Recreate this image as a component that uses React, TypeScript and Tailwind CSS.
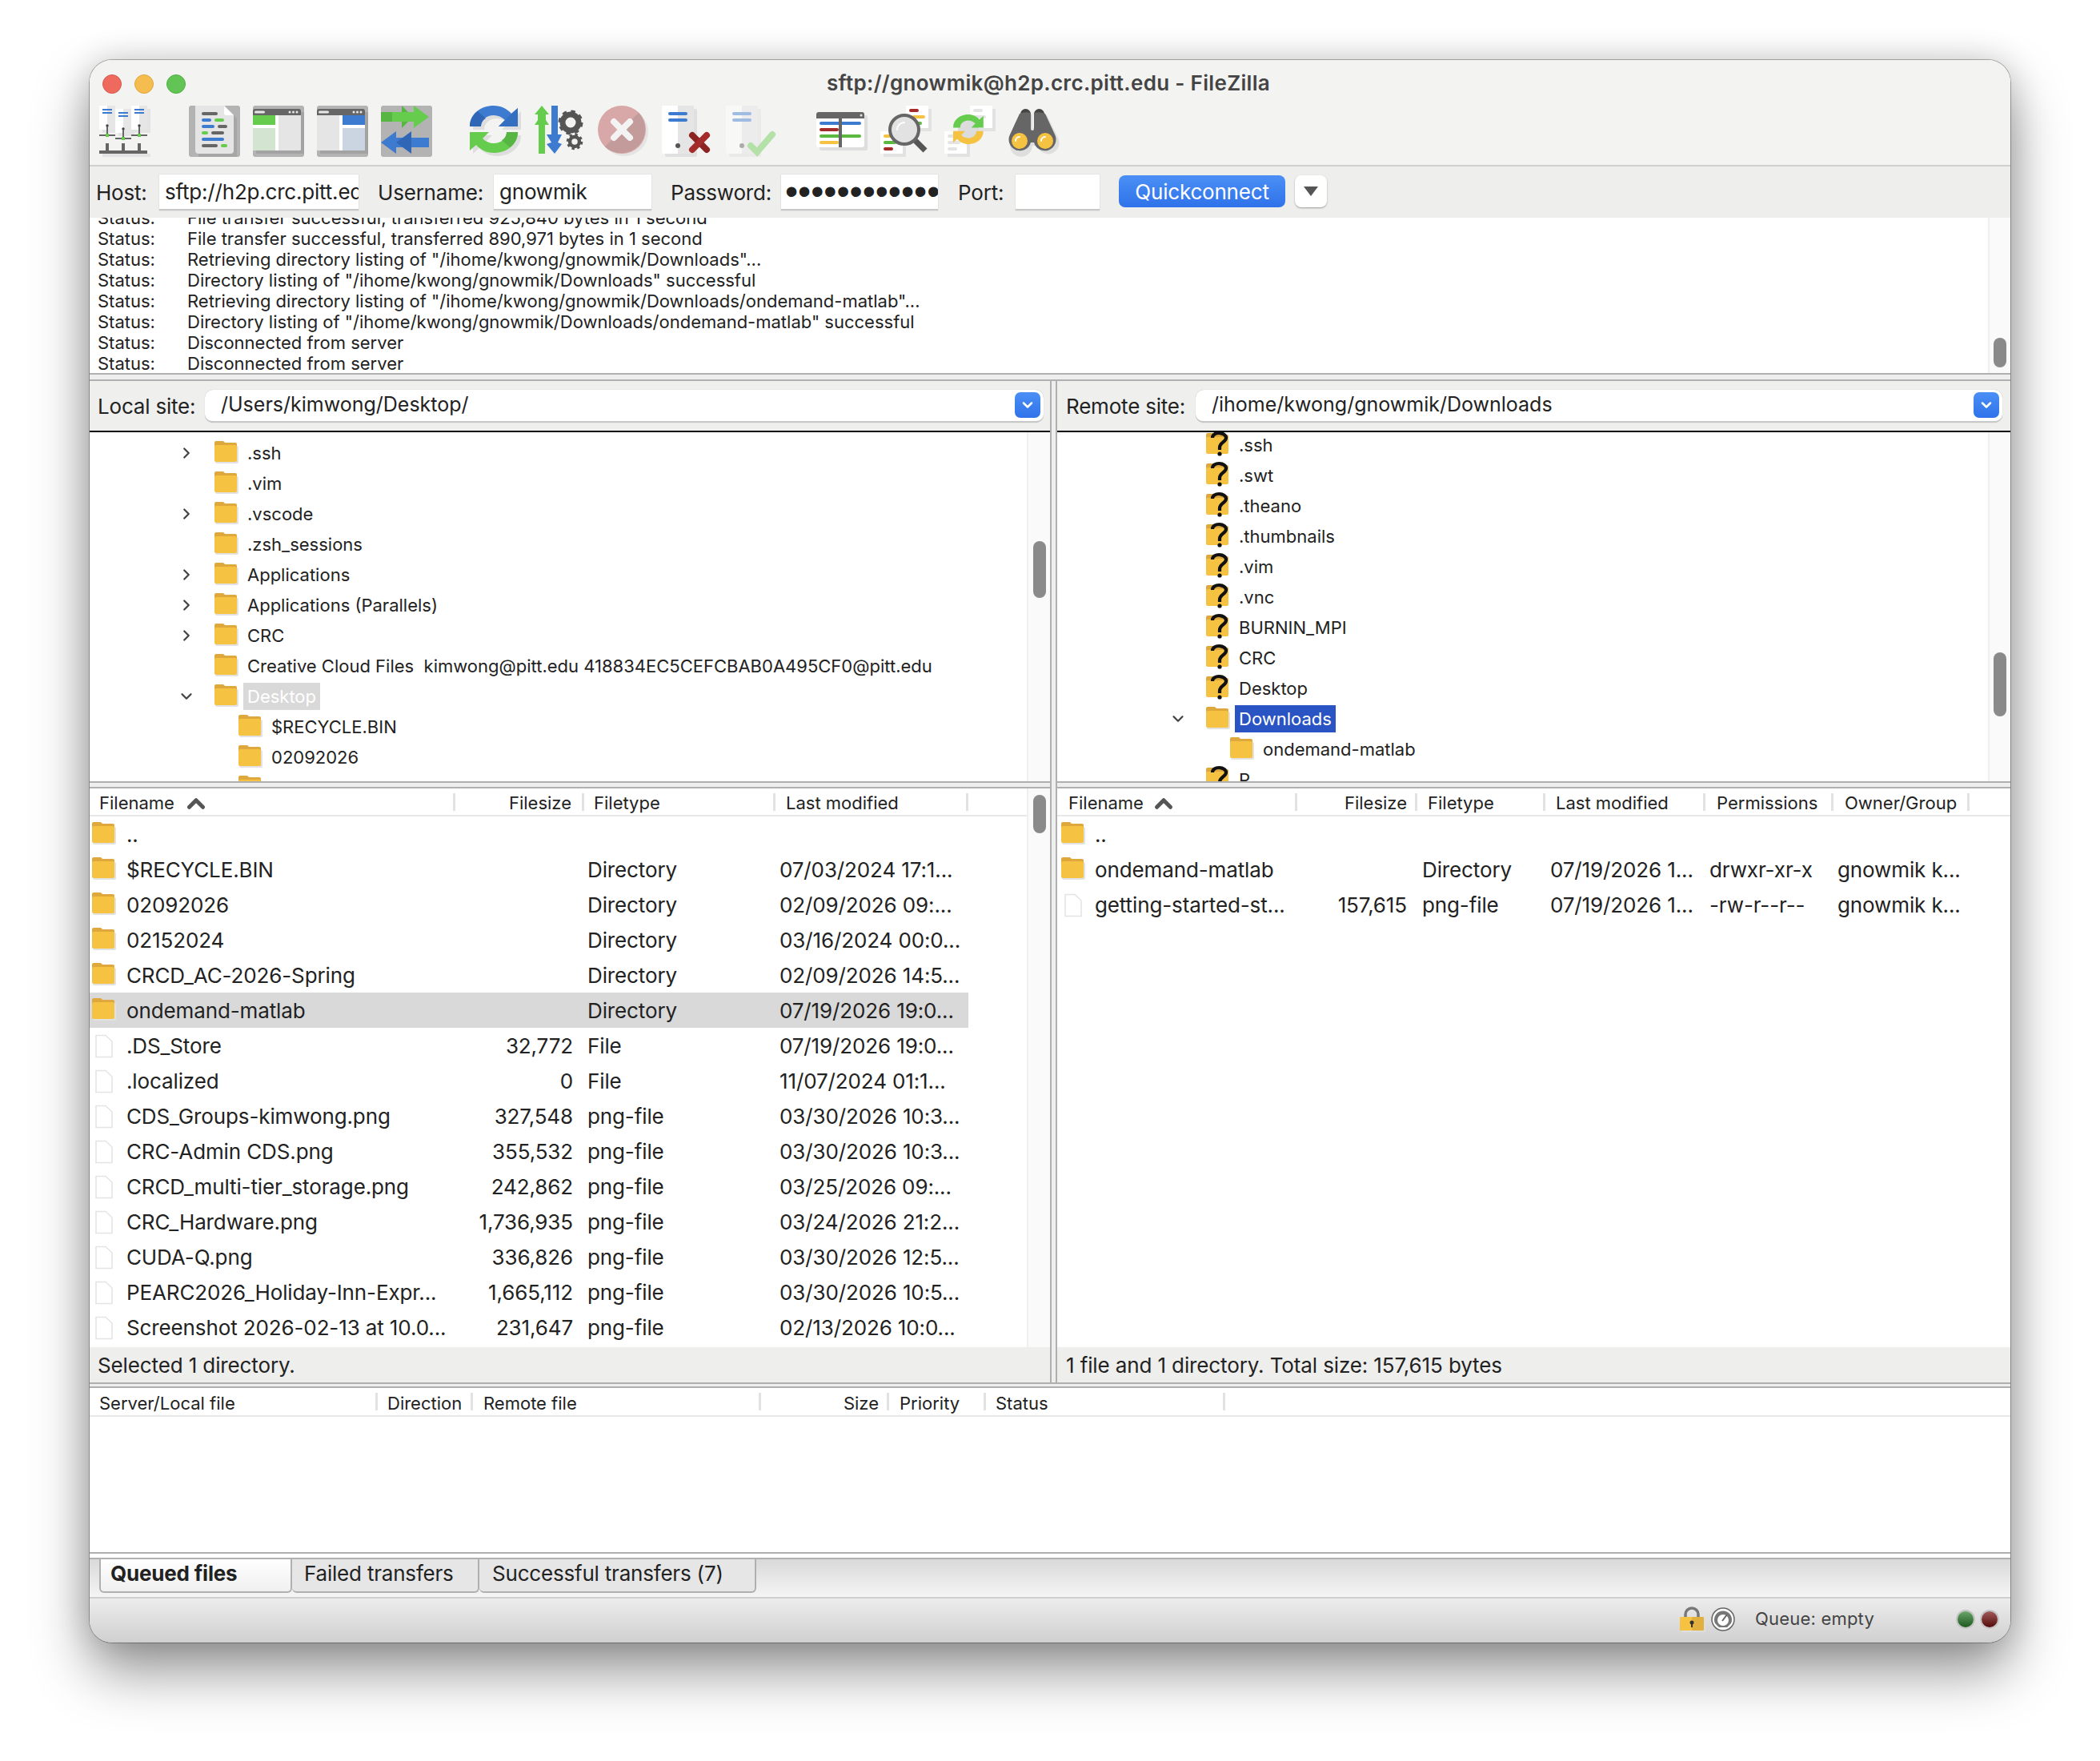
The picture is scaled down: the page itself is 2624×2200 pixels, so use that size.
import { ChevronDown, ChevronRight, ChevronUp } from "lucide-react";

const logLines = [
  "File transfer successful, transferred 925,840 bytes in 1 second",
  "File transfer successful, transferred 890,971 bytes in 1 second",
  'Retrieving directory listing of "/ihome/kwong/gnowmik/Downloads"...',
  'Directory listing of "/ihome/kwong/gnowmik/Downloads" successful',
  'Retrieving directory listing of "/ihome/kwong/gnowmik/Downloads/ondemand-matlab"...',
  'Directory listing of "/ihome/kwong/gnowmik/Downloads/ondemand-matlab" successful',
  "Disconnected from server",
  "Disconnected from server",
];

const localTree = [
  { name: ".ssh", arrow: "right" },
  { name: ".vim" },
  { name: ".vscode", arrow: "right" },
  { name: ".zsh_sessions" },
  { name: "Applications", arrow: "right" },
  { name: "Applications (Parallels)", arrow: "right" },
  { name: "CRC", arrow: "right" },
  { name: "Creative Cloud Files  kimwong@pitt.edu 418834EC5CEFCBAB0A495CF0@pitt.edu" },
  { name: "Desktop", arrow: "down", selected: true },
  { name: "$RECYCLE.BIN", child: true },
  { name: "02092026", child: true },
  { name: "02152024", child: true },
];

const remoteTree = [".ssh", ".swt", ".theano", ".thumbnails", ".vim", ".vnc", "BURNIN_MPI", "CRC", "Desktop"];

const localFiles = [
  ["..", "", "", "", "dir"],
  ["$RECYCLE.BIN", "", "Directory", "07/03/2024 17:1...", "dir"],
  ["02092026", "", "Directory", "02/09/2026 09:...", "dir"],
  ["02152024", "", "Directory", "03/16/2024 00:0...", "dir"],
  ["CRCD_AC-2026-Spring", "", "Directory", "02/09/2026 14:5...", "dir"],
  ["ondemand-matlab", "", "Directory", "07/19/2026 19:0...", "dir"],
  [".DS_Store", "32,772", "File", "07/19/2026 19:0...", "file"],
  [".localized", "0", "File", "11/07/2024 01:1...", "file"],
  ["CDS_Groups-kimwong.png", "327,548", "png-file", "03/30/2026 10:3...", "file"],
  ["CRC-Admin CDS.png", "355,532", "png-file", "03/30/2026 10:3...", "file"],
  ["CRCD_multi-tier_storage.png", "242,862", "png-file", "03/25/2026 09:...", "file"],
  ["CRC_Hardware.png", "1,736,935", "png-file", "03/24/2026 21:2...", "file"],
  ["CUDA-Q.png", "336,826", "png-file", "03/30/2026 12:5...", "file"],
  ["PEARC2026_Holiday-Inn-Expr...", "1,665,112", "png-file", "03/30/2026 10:5...", "file"],
  ["Screenshot 2026-02-13 at 10.0...", "231,647", "png-file", "02/13/2026 10:0...", "file"],
];

const BLUE = "#3d7bd0";
const GREEN = "#66cc4d";
const GREY = "#666666";
const SYNC = "M0 26C0 10 14 0 30 0C39 0 47 4 52 10L60 3V26H36L44 18C40 14 35 12 30 12C21 12 14 18 14 26Z";

const Svg = ({ children }: { children: React.ReactNode }) => (
  <svg width="64" height="64" viewBox="0 0 64 64" className="shrink-0 overflow-visible">
    {children}
  </svg>
);

const Bar = ({ x, y, w, c, h = 4 }: { x: number; y: number; w: number; c: string; h?: number }) => (
  <rect x={x} y={y} width={w} height={h} rx={h / 2} fill={c} />
);

const SiteManagerIcon = () => (
  <Svg>
    <path d="M4 60h60v4H4zM24 8h20v30H24zM44 4h20v30H44zM4 4h20v30H4z" fill="#e4e4e4" />
    {[0, 40, 20].map((x) => {
      const y = x === 20 ? 4 : 0;
      return (
        <g key={x}>
          <rect x={x} y={y} width="10" height="30" fill="#fff" />
          <rect x={x + 10} y={y} width="10" height="30" fill="#e6e6e6" />
          <rect x={x + 4} y={y + 4} width="12" height="2" fill={BLUE} />
          <rect x={x + 4} y={y + 8} width="12" height="2" fill={BLUE} />
          <circle cx={x + 10} cy={y + 25} r="1.7" fill="#444" />
          <rect x={x + 9} y={y + 26} width="2" height="12" fill={GREY} />
          <rect x={x} y={y + 36} width="20" height="2" fill={GREY} />
          <rect x={x + 8} y={y + 35} width="4" height="4" fill={GREEN} />
          <rect x={x + 8} y="47" width="4" height="10" fill={GREY} />
        </g>
      );
    })}
    <rect x="0" y="56" width="60" height="4" fill={GREY} />
  </Svg>
);

const LogIcon = () => (
  <Svg>
    <rect width="64" height="64" rx="3" fill="#b3b3b3" />
    <path d="M12 4H48L60 16V64H12Z" fill="#a6a6a6" />
    <path d="M8 0H44L56 12V56Q56 60 52 60H12Q8 60 8 56Z" fill="#e5e5e5" />
    <path d="M44 0L56 12H47Q44 12 44 9Z" fill="#fff" />
    <Bar x={16} y={8} w={20} c={GREY} />
    <Bar x={16} y={16} w={12} c={BLUE} />
    <Bar x={32} y={16} w={12} c={GREEN} />
    <Bar x={16} y={24} w={16} c={BLUE} />
    <Bar x={36} y={24} w={12} c={GREY} />
    <Bar x={16} y={32} w={8} c={GREEN} />
    <Bar x={28} y={32} w={16} c={GREY} />
    <Bar x={16} y={40} w={28} c={BLUE} />
    <Bar x={16} y={48} w={20} c={GREY} />
    <Bar x={40} y={48} w={8} c={GREEN} />
  </Svg>
);

const PanelIcon = ({ right }: { right?: boolean }) => (
  <Svg>
    <rect width="64" height="64" rx="3" fill="#b3b3b3" />
    <rect x="4" y="8" width="60" height="52" fill="#a3a3a3" />
    <rect y="4" width="60" height="52" rx="2" fill="#fff" />
    <path d="M0 12V6Q0 4 2 4H58Q60 4 60 6V12Z" fill={GREY} />
    <Bar x={2} y={6.5} w={13} h={3} c="#e8e8e8" />
    <circle cx="46" cy="8" r="1.5" fill="#e8e8e8" />
    <circle cx="50.5" cy="8" r="1.5" fill="#e8e8e8" />
    <circle cx="55" cy="8" r="1.5" fill="#e8e8e8" />
    {right ? (
      <>
        <path d="M0 12H28V56H2Q0 56 0 54Z" fill="#e5e5e5" />
        <rect x="32" y="12" width="28" height="12" fill={BLUE} />
        <path d="M32 28H60V54Q60 56 58 56H32Z" fill="#cbd5e2" />
      </>
    ) : (
      <>
        <rect y="12" width="28" height="12" fill={GREEN} />
        <path d="M0 28H28V56H2Q0 56 0 54Z" fill="#d3e4d0" />
        <path d="M32 12H60V54Q60 56 58 56H32Z" fill="#e5e5e5" />
      </>
    )}
  </Svg>
);

const TransferIcon = () => (
  <Svg>
    <rect width="64" height="64" rx="3" fill="#b3b3b3" />
    <path d="M0 8H26V0L40 14L26 28V20H0Z" fill="#57b543" />
    <path d="M14 8H41V0L60 14L41 28V20H14Z" fill={GREEN} />
    <path d="M60 40H19V32L0 46L19 60V52H60Z" fill={BLUE} />
    <path d="M38 32L19 46L38 60Z" fill="#2f66b5" />
    <path d="M38 40H60V52H38Z" fill={BLUE} />
  </Svg>
);

const ReconnectIcon = () => (
  <Svg>
    <path d={SYNC} fill="#dedede" transform="translate(4 4)" />
    <path d={SYNC} fill="#dedede" transform="rotate(180 30 29.5) translate(-4 -4)" />
    <path d={SYNC} fill={BLUE} />
    <path d="M0 26C0 18 4 11 10 7L20 16C16 18 14 22 14 26Z" fill="#2f66b5" />
    <path d="M36 26L52 10L60 3V26Z" fill="#356fc2" />
    <path d={SYNC} fill={GREEN} transform="rotate(180 30 29.5)" />
    <path d="M60 33C60 41 56 48 50 52L40 43C44 41 46 37 46 33Z" fill="#57b543" />
  </Svg>
);

const FilterIcon = () => (
  <Svg>
    <path d="M10 0L19 11H15V18L19 24H14V60H6V24H1L5 18V11H1Z" fill={GREEN} />
    <path d="M22 0H30V36H35L30 46L35 48L26 60L16 48L22 46L16 36H22Z" fill={BLUE} />
    <circle cx="46" cy="21" r="10" fill="none" stroke="#555" strokeWidth="7" />
    <circle cx="46" cy="21" r="13" fill="none" stroke="#555" strokeWidth="5" strokeDasharray="5.1 5.1" />
    <circle cx="51" cy="45" r="6" fill="none" stroke="#555" strokeWidth="4.5" />
    <circle cx="51" cy="45" r="8.5" fill="none" stroke="#555" strokeWidth="3.5" strokeDasharray="3.3 3.4" />
  </Svg>
);

const CancelIcon = () => (
  <Svg>
    <circle cx="33" cy="33" r="30" fill="#e4e4e4" />
    <circle cx="30" cy="30" r="30" fill="#d8a7a7" />
    <path d="M51.2 8.8A30 30 0 0 1 8.8 51.2Z" fill="#c49b9b" />
    <path d="M20 20L40 40M40 20L20 40" stroke="#f3f3f3" strokeWidth="8" strokeLinecap="round" />
  </Svg>
);

const ServerBase = () => (
  <>
    <rect x="4" y="4" width="40" height="60" rx="2" fill="#e0e0e0" />
    <path d="M2 0H20V60H2Q0 60 0 58V2Q0 0 2 0Z" fill="#fff" />
    <path d="M20 0H38Q40 0 40 2V58Q40 60 38 60H20Z" fill="#e5e5e5" />
    <rect x="8" y="8" width="24" height="4" rx="2" fill={BLUE} />
    <rect x="8" y="16" width="24" height="4" rx="2" fill={BLUE} />
    <circle cx="20" cy="50" r="3" fill="#555" />
  </>
);

const DisconnectIcon = () => (
  <Svg>
    <ServerBase />
    <path d="M38 37L56 55" stroke="#8b2323" strokeWidth="8" strokeLinecap="round" />
    <path d="M56 37L38 55" stroke="#a52a2a" strokeWidth="8" strokeLinecap="round" />
  </Svg>
);

const ConnectIcon = () => (
  <Svg>
    <g opacity="0.45">
      <ServerBase />
      <path d="M31 50L39 58L58 36" fill="none" stroke={GREEN} strokeWidth="8" strokeLinecap="round" />
    </g>
  </Svg>
);

const QueueIcon = () => (
  <Svg>
    <rect x="4" y="12" width="60" height="44" rx="2" fill="#dedede" />
    <rect y="8" width="60" height="44" rx="3" fill="#fff" />
    <path d="M0 16V11Q0 8 3 8H57Q60 8 60 11V16Z" fill={GREY} />
    <circle cx="56" cy="12" r="1.5" fill="#e8e8e8" />
    <Bar x={4} y={20} w={52} c={BLUE} />
    <Bar x={4} y={28} w={24} c="#a52a2a" />
    <Bar x={4} y={36} w={52} c="#5cb83f" />
    <Bar x={4} y={44} w={24} c="#f5c242" />
    <rect x="28" y="16" width="4" height="36" fill={GREY} />
  </Svg>
);

const SearchIcon = () => (
  <Svg>
    <rect x="36" y="4" width="28" height="28" fill="#e2e2e2" />
    <rect x="4" y="36" width="28" height="28" fill="#e2e2e2" />
    <rect x="32" width="28" height="28" rx="1" fill="#fff" />
    <rect y="32" width="28" height="28" rx="1" fill="#fff" />
    <Bar x={36} y={4} w={12} c="#a52a2a" />
    <Bar x={40} y={12} w={16} c="#f5c242" />
    <Bar x={40} y={20} w={12} c="#5cb83f" />
    <Bar x={4} y={36} w={12} c="#f5c242" />
    <Bar x={4} y={44} w={16} c="#5cb83f" />
    <Bar x={4} y={52} w={12} c="#a52a2a" />
    <path d="M43 43L56 56" stroke="#555" strokeWidth="7" />
    <circle cx="30" cy="30" r="18" fill="#e2e2e2" stroke={GREY} strokeWidth="4" />
    <path d="M21 30A9 9 0 0 1 30 21" fill="none" stroke="#fff" strokeWidth="2" strokeLinecap="round" />
  </Svg>
);

const CompareIcon = () => (
  <Svg>
    <rect x="36" y="4" width="28" height="28" fill="#e2e2e2" />
    <rect x="4" y="36" width="28" height="28" fill="#e2e2e2" />
    <rect x="32" width="28" height="28" rx="1" fill="#fff" />
    <rect y="32" width="28" height="28" rx="1" fill="#fff" />
    <Bar x={36} y={4} w={12} c="#e4e4e4" />
    <Bar x={36} y={12} w={16} c="#e4e4e4" />
    <Bar x={4} y={36} w={12} c="#e4e4e4" />
    <Bar x={4} y={44} w={16} c="#e4e4e4" />
    <Bar x={4} y={52} w={12} c="#e4e4e4" />
    <circle cx="30" cy="30" r="13" fill="#dcdcdc" />
    <g transform="translate(11 11) scale(0.63)">
      <path d={SYNC} fill={GREEN} />
      <path d={SYNC} fill="#f5c242" transform="rotate(180 30 29.5)" />
    </g>
  </Svg>
);

const FindIcon = () => (
  <Svg>
    <path d="M18 12Q24 9 30 11V30H34V11Q40 9 48 12L62 40A14 14 0 1 1 36 50H30A14 14 0 1 1 6 40Z" fill="#dedede" />
    <rect x="15" y="4" width="13" height="14" rx="6.5" fill="#444" />
    <rect x="32" y="4" width="13" height="14" rx="6.5" fill="#444" />
    <path d="M14 10Q21 7 28 9V28H32V9Q39 7 46 10L58 36A14 14 0 1 1 32 46H28A14 14 0 1 1 2 36Z" fill={GREY} />
    <circle cx="30" cy="29" r="2" fill="#e8e8e8" />
    <circle cx="14" cy="44" r="10" fill="#f5c242" />
    <circle cx="46" cy="44" r="10" fill="#f5c242" />
    <path d="M9 44A5 5 0 0 1 14 39M41 44A5 5 0 0 1 46 39" fill="none" stroke="#fff" strokeWidth="2" strokeLinecap="round" />
  </Svg>
);

const Folder = () => (
  <svg width="30" height="28" viewBox="0 0 30 28" className="shrink-0 -mt-[3px]">
    <rect x="1" y="6" width="29" height="22" rx="2" fill="#e2e2e2" />
    <path d="M0 2Q0 0 2 0H11L13 2H26Q28 2 28 4V9H0Z" fill="#dfa83c" />
    <rect y="5" width="28" height="21" rx="2" fill="#f5c242" />
  </svg>
);

const UnknownFolder = () => (
  <svg width="30" height="30" viewBox="0 0 30 30" className="shrink-0 overflow-visible">
    <path d="M0 2Q0 0 2 0H11L13 2H26Q28 2 28 4V9H0Z" fill="#dfa83c" />
    <rect y="5" width="28" height="21" rx="2" fill="#f5c242" />
    <path d="M8 6C8 2 12 0 16 0C21 0 25 2.5 25 6C25 11 17 12 17 18V21" fill="none" stroke="#111" strokeWidth="4.2" />
    <circle cx="17" cy="26" r="2.6" fill="#111" />
  </svg>
);

const FileIcon = () => (
  <svg width="30" height="30" viewBox="0 0 30 30" className="shrink-0">
    <path d="M5 1.500H17L25 9V28.500H5Z" fill="#fff" stroke="#e4e4e4" strokeWidth="1.500" />
  </svg>
);

const Thumb = ({ top, height }: { top: string; height: string }) => (
  <div className={`${top} ${height} w-[16px] mx-auto rounded-full bg-[#8a8a8a]`} />
);

const Gutter = ({ children, width }: { children: React.ReactNode; width: string }) => (
  <div className={`${width} shrink-0 border-l-2 border-[#efefef] bg-[#fafafa]`}>{children}</div>
);

const Field = ({ className, children }: { className: string; children?: React.ReactNode }) => (
  <div className={`h-[45px] bg-white border-b-2 border-[#c8c8c8] shadow-[0_0_1px_rgba(0,0,0,0.25)] overflow-hidden whitespace-nowrap flex items-center text-[#222] ${className}`}>
    {children}
  </div>
);

const SiteBar = ({ label, path, comboClass, labelClass }: { label: string; path: string; comboClass: string; labelClass: string }) => (
  <div className="h-[62px] bg-[#efefee] flex items-center">
    <span className={`text-[26px] tracking-[-0.2px] text-[#222] whitespace-nowrap ${labelClass}`}>{label}</span>
    <div className={`h-[41px] bg-white rounded-[10px] border-b-2 border-[#c8c8c8] shadow-[0_0_1px_rgba(0,0,0,0.3)] flex items-center justify-between pr-[4px] ${comboClass}`}>
      <span className="text-[25px] ml-[20px] text-[#222]">{path}</span>
      <div className="w-[32px] h-[32px] rounded-[7px] bg-gradient-to-b from-[#4b8ff5] to-[#2f72ea] flex items-center justify-center">
        <ChevronDown size={20} color="#fff" strokeWidth={3} />
      </div>
    </div>
  </div>
);

const Sash = ({ className }: { className: string }) => <div className={`bg-[#eeeeee] border-y-2 border-[#b0b0b0] ${className}`} />;

const HeadCell = ({ children, className }: { children?: React.ReactNode; className: string }) => (
  <div className={`h-[22px] border-r-[3px] border-[#e2e2e2] flex items-center whitespace-nowrap ${className}`}>
    <div className="flex items-center pt-[4px]">{children}</div>
  </div>
);

const SortLabel = ({ gap }: { gap: string }) => (
  <>
    <span>Filename</span>
    <ChevronUp size={34} color="#555" strokeWidth={3.5} className={`${gap} -my-[6px]`} />
  </>
);

export default function App() {
  return (
    <div className="w-[2624px] h-[2200px] bg-white pl-[112px] pt-[75px] font-['Inter','Liberation_Sans',sans-serif] text-[#222]">
      <div className="w-[2400px] h-[1977px] rounded-[28px] overflow-hidden flex flex-col bg-white shadow-[0_36px_70px_rgba(0,0,0,0.42),0_0_40px_rgba(0,0,0,0.16),0_0_0_1px_rgba(0,0,0,0.28)]">
        {/* title bar + toolbar */}
        <div className="h-[133px] bg-[#f3f3f2] border-b-2 border-[#d0d0d0] shrink-0">
          <div className="h-[57px] flex items-center pl-[16px]">
            <div className="flex gap-[16px] pt-[2px]">
              <div className="w-[24px] h-[24px] rounded-full bg-[#ee6a5f] border border-[#d8564c]" />
              <div className="w-[24px] h-[24px] rounded-full bg-[#f5bd4f] border border-[#dca63c]" />
              <div className="w-[24px] h-[24px] rounded-full bg-[#61c454] border border-[#4fae44]" />
            </div>
            <div className="flex-1 text-center text-[26px] font-semibold tracking-[0.32px] text-[#444] pr-[124px]">sftp://gnowmik@h2p.crc.pitt.edu - FileZilla</div>
          </div>
          <div className="flex items-start pl-[12px]">
            <SiteManagerIcon />
            <div className="flex gap-[16px] ml-[48px]">
              <LogIcon />
              <PanelIcon />
              <PanelIcon right />
              <TransferIcon />
            </div>
            <div className="flex gap-[16px] ml-[47px]">
              <ReconnectIcon />
              <FilterIcon />
              <CancelIcon />
              <DisconnectIcon />
              <ConnectIcon />
            </div>
            <div className="flex gap-[16px] ml-[49px]">
              <QueueIcon />
              <SearchIcon />
              <CompareIcon />
              <FindIcon />
            </div>
          </div>
        </div>

        {/* quickconnect */}
        <div className="h-[64px] bg-[#eeeeed] flex items-center shrink-0 text-[26px] tracking-[-0.2px] text-[#222]">
          <span className="ml-[8px] w-[79px]">Host:</span>
          <Field className="w-[249px] pl-[7px]">sftp://h2p.crc.pitt.edu</Field>
          <span className="ml-[24px] w-[145px]">Username:</span>
          <Field className="w-[197px] pl-[7px]">gnowmik</Field>
          <span className="ml-[24px] w-[138px]">Password:</span>
          <Field className="w-[196px] pl-[5px] text-[46px] leading-none tracking-[0px] font-['Liberation_Sans',sans-serif]">••••••••••••••</Field>
          <span className="ml-[25px] w-[72px]">Port:</span>
          <Field className="w-[105px]" />
          <button className="ml-[24px] w-[208px] h-[40px] -mt-[2px] rounded-[8px] bg-gradient-to-b from-[#4b8ff5] to-[#2f72ea] text-white text-center">Quickconnect</button>
          <button className="ml-[12px] w-[40px] h-[40px] -mt-[2px] rounded-[8px] bg-white shadow-[0_1px_2px_rgba(0,0,0,0.35)] flex items-center justify-center">
            <svg width="18" height="12" viewBox="0 0 18 12">
              <path d="M0 0H18L9 12Z" fill="#555" />
            </svg>
          </button>
        </div>

        {/* message log */}
        <div className="h-[194px] bg-white flex shrink-0 overflow-hidden">
          <div className="flex-1 -mt-[13px] pl-[10px] text-[22px] text-[#222]">
            {logLines.map((line, i) => (
              <div key={i} className="h-[26px] leading-[26px] flex whitespace-nowrap">
                <span className="w-[112px]">Status:</span>
                <span>{line}</span>
              </div>
            ))}
          </div>
          <Gutter width="w-[28px]">
            <Thumb top="mt-[150px]" height="h-[37px]" />
          </Gutter>
        </div>
        <Sash className="h-[10px] shrink-0" />

        {/* panes */}
        <div className="flex shrink-0 h-[1251px]">
          <div className="w-[1200px] flex flex-col">
            <SiteBar label="Local site:" labelClass="ml-[10px] w-[134px]" comboClass="w-[1048px]" path="/Users/kimwong/Desktop/" />
            <div className="h-[2px] bg-black" />
            <div className="h-[436px] flex overflow-hidden bg-white">
              <div className="flex-1 pt-[7px] text-[22px] min-w-0">
                {localTree.map((item) => (
                  <div key={item.name} className={`h-[38px] flex items-center whitespace-pre ${item.child ? "pl-[186px]" : "pl-[110px]"}`}>
                    {!item.child && (
                      <div className="w-[46px] shrink-0">
                        {item.arrow === "right" && <ChevronRight size={22} color="#444" strokeWidth={2.5} />}
                        {item.arrow === "down" && <ChevronDown size={22} color="#444" strokeWidth={2.5} />}
                      </div>
                    )}
                    <Folder />
                    <span className={`ml-[6px] px-[5px] h-[34px] leading-[34px] ${item.selected ? "bg-[#d9d9d9] text-white" : ""}`}>{item.name}</span>
                  </div>
                ))}
              </div>
              <Gutter width="w-[29px]">
                <Thumb top="mt-[136px]" height="h-[71px]" />
              </Gutter>
            </div>
            <Sash className="h-[9px]" />
            <div className="h-[698px] flex bg-white">
              <div className="flex-1 min-w-0">
                <div className="h-[35px] border-b-2 border-[#e8e8e8] grid grid-cols-[457px_161px_239px_241px] items-center text-[22px]">
                  <HeadCell className="pl-[12px]"><SortLabel gap="ml-[10px]" /></HeadCell>
                  <HeadCell className="justify-end pr-[13px]">Filesize</HeadCell>
                  <HeadCell className="pl-[12px]">Filetype</HeadCell>
                  <HeadCell className="pl-[13px]">Last modified</HeadCell>
                </div>
                {localFiles.map((row) => (
                  <div key={row[0]} className={`h-[44px] w-[1098px] pt-[1px] grid grid-cols-[457px_161px_239px_241px] items-center text-[26px] tracking-[-0.12px] whitespace-nowrap ${row[0] === "ondemand-matlab" ? "bg-[#d9d9d9]" : ""}`}>
                    <div className="flex items-center pl-[3px] gap-[13px]">
                      {row[4] === "dir" ? <Folder /> : <FileIcon />}
                      <span>{row[0]}</span>
                    </div>
                    <div className="text-right pr-[14px]">{row[1]}</div>
                    <div className="pl-[4px]">{row[2]}</div>
                    <div className="pl-[5px]">{row[3]}</div>
                  </div>
                ))}
              </div>
              <Gutter width="w-[29px]">
                <Thumb top="mt-[8px]" height="h-[48px]" />
              </Gutter>
            </div>
            <div className="h-[44px] bg-[#eeeeed] flex items-center pl-[10px] text-[26px] tracking-[-0.12px]">Selected 1 directory.</div>
          </div>

          <div className="w-[9px] bg-[#eeeeee] border-x-2 border-[#b0b0b0]" />

          <div className="flex-1 flex flex-col min-w-0">
            <SiteBar label="Remote site:" labelClass="ml-[11px] w-[162px]" comboClass="w-[1008px]" path="/ihome/kwong/gnowmik/Downloads" />
            <div className="h-[2px] bg-black" />
            <div className="h-[436px] flex overflow-hidden bg-white">
              <div className="flex-1 -mt-[3px] text-[22px]">
                {remoteTree.map((name) => (
                  <div key={name} className="h-[38px] flex items-center pl-[186px] whitespace-nowrap">
                    <UnknownFolder />
                    <span className="ml-[6px] px-[5px]">{name}</span>
                  </div>
                ))}
                <div className="h-[38px] flex items-center pl-[140px]">
                  <div className="w-[46px]">
                    <ChevronDown size={22} color="#444" strokeWidth={2.5} />
                  </div>
                  <Folder />
                  <span className="ml-[6px] px-[5px] h-[34px] leading-[34px] bg-[#2a54c4] text-white">Downloads</span>
                </div>
                <div className="h-[38px] flex items-center pl-[216px]">
                  <Folder />
                  <span className="ml-[6px] px-[5px]">ondemand-matlab</span>
                </div>
                <div className="h-[38px] flex items-center pl-[186px]">
                  <UnknownFolder />
                  <span className="ml-[6px] px-[5px]">P</span>
                </div>
              </div>
              <Gutter width="w-[28px]">
                <Thumb top="mt-[275px]" height="h-[80px]" />
              </Gutter>
            </div>
            <Sash className="h-[9px]" />
            <div className="h-[698px] bg-white">
              <div className="h-[35px] border-b-2 border-[#e8e8e8] grid grid-cols-[300px_150px_160px_200px_160px_170px] items-center text-[22px]">
                <HeadCell className="pl-[14px]"><SortLabel gap="ml-[8px]" /></HeadCell>
                <HeadCell className="justify-end pr-[10px]">Filesize</HeadCell>
                <HeadCell className="pl-[13px]">Filetype</HeadCell>
                <HeadCell className="pl-[13px]">Last modified</HeadCell>
                <HeadCell className="pl-[14px]">Permissions</HeadCell>
                <HeadCell className="pl-[14px]">Owner/Group</HeadCell>
              </div>
              {[
                ["..", "", "", "", "", ""],
                ["ondemand-matlab", "", "Directory", "07/19/2026 1...", "drwxr-xr-x", "gnowmik k..."],
                ["getting-started-st...", "157,615", "png-file", "07/19/2026 1...", "-rw-r--r--", "gnowmik k..."],
              ].map((row, i) => (
                <div key={row[0]} className="h-[44px] pt-[1px] grid grid-cols-[300px_150px_160px_200px_160px_170px] items-center text-[26px] tracking-[-0.12px] whitespace-nowrap">
                  <div className="flex items-center pl-[5px] gap-[12px]">
                    {i < 2 ? <Folder /> : <FileIcon />}
                    <span>{row[0]}</span>
                  </div>
                  <div className="text-right pr-[13px]">{row[1]}</div>
                  <div className="pl-[6px]">{row[2]}</div>
                  <div className="pl-[6px]">{row[3]}</div>
                  <div className="pl-[5px]">{row[4]}</div>
                  <div className="pl-[5px]">{row[5]}</div>
                </div>
              ))}
            </div>
            <div className="h-[44px] bg-[#eeeeed] flex items-center pl-[11px] text-[26px] tracking-[-0.12px]">1 file and 1 directory. Total size: 157,615 bytes</div>
          </div>
        </div>
        <Sash className="h-[7px] shrink-0" />

        {/* queue */}
        <div className="h-[36px] shrink-0 bg-white border-b-2 border-[#e8e8e8] grid grid-cols-[360px_119px_360px_160px_121px_299px] items-center text-[22px]">
          <HeadCell className="pl-[12px]">Server/Local file</HeadCell>
          <HeadCell className="pl-[12px]">Direction</HeadCell>
          <HeadCell className="pl-[13px]">Remote file</HeadCell>
          <HeadCell className="justify-end pr-[10px]">Size</HeadCell>
          <HeadCell className="pl-[13px]">Priority</HeadCell>
          <HeadCell className="pl-[12px]">Status</HeadCell>
        </div>
        <div className="h-[171px] shrink-0 bg-white border-b-2 border-[#b0b0b0]" />
        <div className="h-[5px] shrink-0 bg-white" />

        {/* tabs */}
        <div className="h-[51px] shrink-0 border-t-2 border-[#b0b0b0] border-b-2 border-b-[#cfcfcf] bg-gradient-to-b from-[#d9d9d9] to-[#f5f5f5] flex items-start pl-[12px] text-[26px] tracking-[-0.2px]">
          <div className="w-[241px] h-[42px] pl-[12px] pb-[5px] flex items-center font-bold bg-gradient-to-b from-white to-[#f0f0f0] border-x-2 border-b-2 border-[#b0b0b0] rounded-b-[6px]">Queued files</div>
          <div className="w-[234px] h-[42px] pl-[15px] pb-[5px] flex items-center bg-[#e6e6e6] border-r-2 border-b-2 border-[#b0b0b0] rounded-b-[6px]">Failed transfers</div>
          <div className="w-[346px] h-[42px] pl-[16px] pb-[5px] flex items-center bg-[#e6e6e6] border-r-2 border-b-2 border-[#b0b0b0] rounded-b-[6px]">Successful transfers (7)</div>
        </div>

        {/* status bar */}
        <div className="flex-1 bg-gradient-to-b from-[#ececec] to-[#d0d0d0] flex items-center justify-end pr-[16px] text-[22px] text-[#444]">
          <svg width="32" height="32" viewBox="0 0 32 32" className="-mt-[4px]">
            <path d="M7 16V10a8 8 0 0 1 16 0v6" fill="none" stroke="#777" strokeWidth="3.500" />
            <rect x="2" y="15" width="30" height="17" fill="#dedede" />
            <rect y="13" width="15" height="17" rx="1" fill="#f5c242" />
            <rect x="15" y="13" width="15" height="17" rx="1" fill="#e3b040" />
            <circle cx="15" cy="20" r="2.500" fill="#333" />
            <rect x="14" y="20" width="2" height="6" fill="#333" />
          </svg>
          <svg width="30" height="30" viewBox="0 0 30 30" className="ml-[7px] -mt-[4px]">
            <circle cx="15" cy="15" r="14" fill="#fff" stroke="#666" strokeWidth="1.500" />
            <path d="M5 20A11 11 0 1 1 25 20L20 25H10Z" fill="#777" />
            <circle cx="15" cy="16" r="7" fill="#fff" />
            <path d="M14 17L20 9" stroke="#666" strokeWidth="2" />
          </svg>
          <span className="ml-[25px] w-[253px] pb-[5px] tracking-[0.2px]">Queue: empty</span>
          <div className="w-[20px] h-[20px] rounded-full bg-gradient-to-b from-[#6aa56a] to-[#1c5a1c] shadow-[0_0_0_2px_#c4c4c4] -mt-[3px]" />
          <div className="ml-[10px] w-[20px] h-[20px] rounded-full bg-gradient-to-b from-[#a05a5a] to-[#540808] shadow-[0_0_0_2px_#c4c4c4] -mt-[3px]" />
        </div>
      </div>
    </div>
  );
}
